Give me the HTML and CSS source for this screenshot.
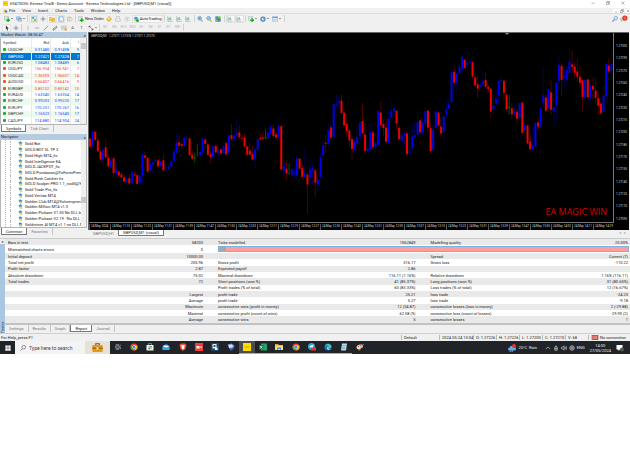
FILE: index.html
```html
<!DOCTYPE html>
<html lang="en">
<head>
<meta charset="utf-8">
<title>Exness-Trial8 - Demo Account</title>
<link rel="stylesheet" href="styles.css">
</head>
<body>
<svg class="defs" aria-hidden="true">
  <symbol id="newchart" viewBox="0 0 16 16"><path fill="#fff" stroke="#6f8798" d="M1 1h11v10H1z"/><path stroke="#35a035" d="M3 8l3-4 2 2 2-3" fill="none"/><path fill="#12b512" d="M9 6h4v3h3v4h-3v3H9v-3H6V9h3z"/></symbol>
  <symbol id="windows" viewBox="0 0 16 16"><path fill="#b9d9f2" stroke="#5b8fc0" d="M1 2h10v8H1zM5 6h10v8H5z"/><path fill="#5b9ad5" d="M5 6h10v2H5z"/></symbol>
  <symbol id="watch" viewBox="0 0 16 16"><path fill="#d9ecfa" stroke="#4e9ad0" d="M1 1h14v14H1z"/><path fill="#22b14c" d="M3 3h5v4H3z"/><path fill="#f0a020" d="M8 8h5v5H8z"/></symbol>
  <symbol id="cross" viewBox="0 0 16 16"><path stroke="#7f8c99" stroke-width="1.5" fill="none" d="M8 1v14M1 8h14M5 8a3 3 0 1 0 6 0 3 3 0 1 0-6 0"/></symbol>
  <symbol id="folder" viewBox="0 0 16 16"><path fill="#f5cd55" stroke="#c79a25" d="M1 3h5l2 2h6v8H1z"/><path fill="#ffd42a" stroke="#c48c10" d="M11 6l2 3 3 1-2 2v3l-3-1-3 1V12L6 10l3-1z"/></symbol>
  <symbol id="terminal" viewBox="0 0 16 16"><path fill="#fff" stroke="#4589d0" stroke-width="1.6" d="M2 2h12v12H2z"/><path fill="#a8cdf0" d="M3 3h3v10H3z"/></symbol>
  <symbol id="tester" viewBox="0 0 16 16"><path fill="#dce6ee" stroke="#7690a5" d="M1 3h9v10H1z"/><circle cx="10" cy="9" r="4" fill="#fff3c0" stroke="#c69a40"/></symbol>
  <symbol id="order" viewBox="0 0 16 16"><path fill="#fff" stroke="#708090" d="M2 1h9v12H2z"/><path stroke="#8aa" d="M4 4h5M4 6h5"/><path fill="#12b512" d="M8 6h4v3h3v4h-3v3H8v-3H5V9h3z"/></symbol>
  <symbol id="diamond" viewBox="0 0 16 16"><path fill="#f5bd24" stroke="#c98b12" d="M8 1l7 6-7 8-7-6z"/><path fill="#fff0a5" d="M8 3l3 3-4 3-3-1z"/></symbol>
  <symbol id="printer" viewBox="0 0 16 16"><path fill="#e7ebee" stroke="#9aa3aa" d="M4 1h8v7h3v6H1V8h3z"/></symbol>
  <symbol id="radio" viewBox="0 0 16 16"><circle cx="8" cy="8" r="6" fill="#eef1f3" stroke="#a7afb5"/><circle cx="8" cy="8" r="2" fill="#98a2aa"/></symbol>
  <symbol id="ea" viewBox="0 0 16 16"><path fill="#3d9ac9" d="M1 6l7-5 7 5-7 3z"/><path fill="#f4cf55" stroke="#b6902c" d="M4 8l4 2 3-2v5H5z"/><circle cx="12" cy="12" r="4" fill="#15ad31"/></symbol>
  <symbol id="robot" viewBox="0 0 16 16"><path fill="#3390bd" d="M1 6l6-5 8 5-7 3z"/><path fill="#2a779f" d="M3 7l5 3 5-3v3H3z"/><path fill="#e8c654" d="M5 10h8v4l-3 2-4-2z"/></symbol>
  <symbol id="bars" viewBox="0 0 16 16"><path stroke="#5f7683" fill="none" d="M2 1v13h13"/><path stroke="#2ea147" stroke-width="1.5" fill="none" d="M5 5v7M5 6h2M9 3v7M9 9h3"/></symbol>
  <symbol id="zoomin" viewBox="0 0 16 16"><path stroke="#d7ab36" stroke-width="3" d="M10 10l5 5"/><circle cx="7" cy="6" r="5" fill="#b9e1f8" stroke="#3585bd" stroke-width="1.5"/><path stroke="#247ab8" stroke-width="1.5" d="M4 6h6M7 3v6"/></symbol>
  <symbol id="zoomout" viewBox="0 0 16 16"><path stroke="#d7ab36" stroke-width="3" d="M10 10l5 5"/><circle cx="7" cy="6" r="5" fill="#b9e1f8" stroke="#3585bd" stroke-width="1.5"/><path stroke="#247ab8" stroke-width="1.5" d="M4 6h6"/></symbol>
  <symbol id="tiles" viewBox="0 0 16 16"><path fill="#3f7fc9" d="M1 1h7v7H1z"/><path fill="#56b43c" d="M8 1h7v7H8zM1 8h7v7H1z"/><path fill="#3f68a5" d="M8 8h7v7H8z"/><path stroke="#fff" d="M3 5h3M10 5h3M3 12h3M10 12h3"/></symbol>
  <symbol id="clock" viewBox="0 0 16 16"><circle cx="8" cy="8" r="7" fill="#377fbd"/><circle cx="8" cy="8" r="4" fill="#dcedf8"/><path stroke="#346" fill="none" d="M8 5v3h3"/></symbol>
  <symbol id="template" viewBox="0 0 16 16"><path fill="#dcecf8" stroke="#5c8fb8" d="M1 2h14v12H1z"/><path fill="#5c9dd2" d="M1 2h14v3H1z"/><path stroke="#d48a65" fill="none" d="M3 11l3-3 3 2 4-3"/></symbol>
  <symbol id="pointer" viewBox="0 0 16 16"><path fill="#333" d="M5 1l8 8-4 .4 2 5-2 .8-2-5-2 2z"/></symbol>
  <symbol id="vline" viewBox="0 0 16 16"><path stroke="#777" d="M8 2v12"/></symbol>
  <symbol id="hline" viewBox="0 0 16 16"><path stroke="#777" stroke-width="1.5" d="M2 8h12"/></symbol>
  <symbol id="dline" viewBox="0 0 16 16"><path stroke="#666" stroke-width="1.5" d="M2 14L14 2"/></symbol>
  <symbol id="channel" viewBox="0 0 16 16"><path stroke="#666" stroke-width="1.3" fill="none" d="M1 12L13 2M3 15L15 5M4 9v6M8 6v6M12 3v5"/></symbol>
  <symbol id="fibo" viewBox="0 0 16 16"><path stroke="#777" stroke-width="1.5" stroke-dasharray="2 1" d="M1 3h14M1 7h14M1 11h14"/><path fill="#e9a32b" d="M10 9h5v6h-5z"/></symbol>
  <symbol id="arrows" viewBox="0 0 16 16"><path stroke="#555" stroke-width="2" fill="none" d="M3 3l4 4M9 9l4 4M3 7V3h4M13 9v4H9"/></symbol>
  <symbol id="chrome" viewBox="0 0 16 16"><circle cx="8" cy="8" r="7" fill="#ea4335"/><path fill="#34a853" d="M2 4.500l6 3.500v7A7 7 0 0 1 2 4.500"/><path fill="#fbbc05" d="M8 5h6.300A7 7 0 0 1 8 15l3-6z"/><circle cx="8" cy="8" r="3.400" fill="#fff"/><circle cx="8" cy="8" r="2.600" fill="#4285f4"/></symbol>
</svg>

<div class="app">
  <header class="titlebar">
    <svg class="logo" viewBox="0 0 16 16"><path fill="#ffd400" d="M0 0h16v16H0z"/><path stroke="#8a7500" d="M3 8h10"/></svg>
    <span class="grow">69475035: Exness-Trial8 - Demo Account - Exness Technologies Ltd - [GBPUSD,M1 (visual)]</span>
    <button class="win" aria-label="Minimize"><svg viewBox="0 0 16 16"><path d="M2 9h12"/></svg></button>
    <button class="win" aria-label="Restore"><svg viewBox="0 0 16 16"><path d="M2 5h9v9H2zM5 5V2h9v9h-3"/></svg></button>
    <button class="win" aria-label="Close"><svg viewBox="0 0 16 16"><path d="M2 2l12 12M14 2L2 14"/></svg></button>
  </header>

  <nav class="menubar">
    <svg class="logo" viewBox="0 0 16 16"><path fill="#f0b429" d="M1 3h10v10H1z"/><path fill="#3c86c8" d="M6 6h9v8H6z"/></svg>
    <a href="#">File</a><a href="#">View</a><a href="#">Insert</a><a href="#">Charts</a><a href="#">Tools</a><a href="#">Window</a><a href="#">Help</a>
    <span class="grow"></span>
    <button class="child" aria-label="Minimize chart"><svg viewBox="0 0 16 16"><path d="M3 12h9"/></svg></button>
    <button class="child" aria-label="Restore chart"><svg viewBox="0 0 16 16"><path d="M2 6h8v8H2zM6 6V2h8v8h-4"/></svg></button>
    <button class="child" aria-label="Close chart"><svg viewBox="0 0 16 16"><path d="M3 3l10 10M13 3L3 13"/></svg></button>
  </nav>

  <div class="toolbar">
    <button class="tool drop" aria-label="New chart"><svg><use href="#newchart"/></svg></button>
    <button class="tool drop" aria-label="Profiles"><svg><use href="#windows"/></svg></button>
    <i class="sep"></i>
    <button class="tool on" aria-label="Market Watch"><svg><use href="#watch"/></svg></button>
    <button class="tool" aria-label="Data window"><svg><use href="#cross"/></svg></button>
    <button class="tool on" aria-label="Navigator"><svg><use href="#folder"/></svg></button>
    <button class="tool on" aria-label="Terminal"><svg><use href="#terminal"/></svg></button>
    <button class="tool" aria-label="Tester"><svg><use href="#tester"/></svg></button>
    <i class="sep"></i>
    <button class="tool text"><svg><use href="#order"/></svg>New Order</button>
    <button class="tool" aria-label="MetaEditor"><svg><use href="#diamond"/></svg></button>
    <button class="tool" aria-label="Print"><svg><use href="#printer"/></svg></button>
    <button class="tool" aria-label="Signals"><svg><use href="#radio"/></svg></button>
    <button class="tool text on"><svg><use href="#ea"/></svg>AutoTrading</button>
    <i class="sep"></i>
    <button class="tool" aria-label="Bar chart"><svg><use href="#bars"/></svg></button>
    <button class="tool" aria-label="Candlesticks"><svg><use href="#bars"/></svg></button>
    <button class="tool" aria-label="Line chart"><svg><use href="#bars"/></svg></button>
    <i class="sep"></i>
    <button class="tool" aria-label="Zoom in"><svg><use href="#zoomin"/></svg></button>
    <button class="tool" aria-label="Zoom out"><svg><use href="#zoomout"/></svg></button>
    <button class="tool" aria-label="Tile windows"><svg><use href="#tiles"/></svg></button>
    <i class="sep"></i>
    <button class="tool on" aria-label="Auto scroll"><svg><use href="#bars"/></svg></button>
    <button class="tool on" aria-label="Chart shift"><svg><use href="#bars"/></svg></button>
    <i class="sep"></i>
    <button class="tool drop" aria-label="Indicators"><svg><use href="#newchart"/></svg></button>
    <button class="tool drop" aria-label="Periods"><svg><use href="#clock"/></svg></button>
    <button class="tool drop" aria-label="Templates"><svg><use href="#template"/></svg></button>
    <i class="sep"></i>
    <span class="grow"></span>
    <button class="tool" aria-label="Search"><svg viewBox="0 0 16 16"><path stroke="#5b8fd6" stroke-width="3" d="M1 15l6-6"/><circle cx="10" cy="6" r="4.500" fill="#e5f0fb" stroke="#5b8fd6" stroke-width="2"/></svg></button>
    <button class="tool alert" aria-label="Notifications"><svg viewBox="0 0 16 16"><path fill="#d4dae0" stroke="#a5adb5" d="M0 7h9v6H5l-2 2v-2H0z"/><circle cx="10" cy="7" r="6" fill="#e03a22"/><path stroke="#fff" d="M10 4v6"/></svg></button>
  </div>

  <div class="toolbar">
    <button class="tool on" aria-label="Cursor"><svg><use href="#pointer"/></svg></button>
    <button class="tool" aria-label="Crosshair"><svg><use href="#cross"/></svg></button>
    <i class="sep"></i>
    <button class="tool" aria-label="Vertical line"><svg><use href="#vline"/></svg></button>
    <button class="tool" aria-label="Horizontal line"><svg><use href="#hline"/></svg></button>
    <button class="tool" aria-label="Trendline"><svg><use href="#dline"/></svg></button>
    <button class="tool" aria-label="Channel"><svg><use href="#channel"/></svg></button>
    <button class="tool" aria-label="Fibonacci"><svg><use href="#fibo"/></svg></button>
    <button class="tool">A</button>
    <button class="tool">T</button>
    <button class="tool drop" aria-label="Arrows"><svg><use href="#arrows"/></svg></button>
    <i class="sep"></i>
    <button class="tool off" disabled>M1</button><button class="tool off" disabled>M5</button><button class="tool off" disabled>M15</button><button class="tool off" disabled>M30</button><button class="tool off" disabled>H1</button><button class="tool off" disabled>H4</button><button class="tool off" disabled>D1</button><button class="tool off" disabled>W1</button><button class="tool off" disabled>MN</button>
    <i class="sep"></i>
  </div>

  <main class="work">
    <aside class="side">
      <section class="panel">
        <h2>Market Watch: 08:55:47<button aria-label="Close Market Watch">×</button></h2>
        <div class="scroller">
          <table class="quotes">
            <thead><tr><th>Symbol</th><th>Bid</th><th>Ask</th><th>!</th></tr></thead>
            <tbody>
              <tr class="up"><td>USDCHF</td><td>0.91480</td><td>0.91498</td><td>9</td></tr>
              <tr class="up sel"><td>GBPUSD</td><td>1.27421</td><td>1.27428</td><td>7</td></tr>
              <tr class="up"><td>EURUSD</td><td>1.08483</td><td>1.08489</td><td>6</td></tr>
              <tr class="down"><td>USDJPY</td><td>156.934</td><td>156.941</td><td>7</td></tr>
              <tr class="down"><td>USDCAD</td><td>1.36593</td><td>1.36607</td><td>14</td></tr>
              <tr class="down"><td>AUDUSD</td><td>0.66407</td><td>0.66416</td><td>9</td></tr>
              <tr class="down"><td>EURGBP</td><td>0.85132</td><td>0.85142</td><td>10</td></tr>
              <tr class="up"><td>EURAUD</td><td>1.63340</td><td>1.63354</td><td>14</td></tr>
              <tr class="up"><td>EURCHF</td><td>0.99203</td><td>0.99220</td><td>17</td></tr>
              <tr class="up"><td>EURJPY</td><td>170.251</td><td>170.267</td><td>16</td></tr>
              <tr class="up"><td>GBPCHF</td><td>1.16523</td><td>1.16540</td><td>17</td></tr>
              <tr class="up"><td>CADJPY</td><td>114.880</td><td>114.904</td><td>24</td></tr>
            </tbody>
          </table>
          <div class="bar"><i></i></div>
        </div>
        <div class="tabs"><button class="active">Symbols</button><button>Tick Chart</button></div>
      </section>
      <section class="panel">
        <h2>Navigator<button aria-label="Close Navigator">×</button></h2>
        <div class="scroller">
          <ul class="tree">
            <li><svg><use href="#robot"/></svg>Gold Bot</li>
            <li><svg><use href="#robot"/></svg>GOLD BOT SL TP 3</li>
            <li><svg><use href="#robot"/></svg>Gold High MT4_fix</li>
            <li><svg><use href="#robot"/></svg>Gold Intelligence EA</li>
            <li><svg><use href="#robot"/></svg>GOLD JACKPOT_fix</li>
            <li><svg><use href="#robot"/></svg>GOLD Pundawan@YoForexPren</li>
            <li><svg><use href="#robot"/></svg>Gold Rush Catcher fix</li>
            <li><svg><use href="#robot"/></svg>GOLD Scalper PRO 1.1_nodll@Yo</li>
            <li><svg><use href="#robot"/></svg>Gold Trade Pro_fix</li>
            <li><svg><use href="#robot"/></svg>Gold Veritas MT4</li>
            <li><svg><use href="#robot"/></svg>Golden Club MT4@Yoforexpren</li>
            <li><svg><use href="#robot"/></svg>Golden Million MT4 v1.3</li>
            <li><svg><use href="#robot"/></svg>Golden Pickaxe V1.50 No DLL by</li>
            <li><svg><use href="#robot"/></svg>Golden Pickaxe V2.19 - No DLL b</li>
            <li><svg><use href="#robot"/></svg>Goldminer AI MT4 v1.1 no DLL M</li>
          </ul>
          <div class="bar low"><i></i></div>
        </div>
        <div class="tabs"><button class="active">Common</button><button>Favorites</button></div>
      </section>
    </aside>

    <section class="charts">
      <div class="chart">
        <div class="plot">
          <svg id="candles" viewBox="0 0 1575 570" preserveAspectRatio="none" role="img" aria-label="GBPUSD candlesticks"></svg>
          <span class="ohlc">GBPUSD,M1&nbsp; 1.27371 1.27376 1.27371 1.27375</span>
          <span class="mark">EA MAGIC WIN</span>
          <i class="shift"></i>
        </div>
        <div class="prices">
          <span>1.27305</span><span>1.27290</span><span>1.27275</span><span>1.27260</span><span>1.27245</span><span>1.27230</span><span>1.27215</span><span>1.27200</span><span>1.27185</span><span>1.27170</span><span>1.27155</span><span>1.27140</span><span>1.27125</span><span>1.27110</span><span>1.27095</span>
        </div>
        <div class="times">
          <span>24 May 2024</span><span>24 May 11:15</span><span>24 May 11:23</span><span>24 May 11:31</span><span>24 May 11:39</span><span>24 May 11:47</span><span>24 May 11:55</span><span>24 May 12:03</span><span>24 May 12:11</span><span>24 May 12:19</span><span>24 May 12:27</span><span>24 May 12:35</span><span>24 May 12:43</span><span>24 May 12:51</span><span>24 May 12:59</span><span>24 May 13:07</span><span>24 May 13:15</span><span>24 May 13:23</span><span>24 May 13:31</span><span>24 May 13:39</span><span>24 May 13:47</span><span>24 May 13:55</span><span>24 May 14:03</span><span>24 May 14:11</span><span>24 May 14:19</span>
        </div>
      </div>
      <div class="tabs chart-tabs"><button>GBPUSD,H1</button><button class="active">GBPUSD,M1 (visual)</button><span class="grow"></span><span class="arrows">◂ &nbsp; ▸</span></div>
    </section>
  </main>

  <section class="tester">
    <div class="rail"><button aria-label="Close Tester">×</button><b>Tester</b></div>
    <div class="pane">
      <table class="report">
        <colgroup><col class="c1"><col class="c2"><col class="c3"><col class="c4"><col class="c3"><col class="c4"></colgroup>
        <tbody>
          <tr><th>Bars in test</th><td>58203</td><th>Ticks modelled</th><td>1062849</td><th>Modelling quality</th><td>25.00%</td></tr>
          <tr><th>Mismatched charts errors</th><td>0</td><td colspan="4" class="quality"><div><i></i></div></td></tr>
          <tr><th>Initial deposit</th><td>10000.00</td><th></th><td></td><th>Spread</th><td>Current (7)</td></tr>
          <tr><th>Total net profit</th><td>205.96</td><th>Gross profit</th><td>316.17</td><th>Gross loss</th><td>-110.22</td></tr>
          <tr><th>Profit factor</th><td>2.87</td><th>Expected payoff</th><td>2.86</td><th></th><td></td></tr>
          <tr><th>Absolute drawdown</th><td>75.02</td><th>Maximal drawdown</th><td>116.11 (1.16%)</td><th>Relative drawdown</th><td>1.16% (116.11)</td></tr>
          <tr><th>Total trades</th><td>72</td><th>Short positions (won %)</th><td>41 (85.37%)</td><th>Long positions (won %)</th><td>31 (80.65%)</td></tr>
          <tr><th></th><td></td><th>Profit trades (% of total)</th><td>60 (83.33%)</td><th>Loss trades (% of total)</th><td>12 (16.67%)</td></tr>
          <tr><th></th><td>Largest</td><th>profit trade</th><td>25.21</td><th>loss trade</th><td>-24.23</td></tr>
          <tr><th></th><td>Average</td><th>profit trade</th><td>5.27</td><th>loss trade</th><td>-9.18</td></tr>
          <tr><th></th><td>Maximum</td><th>consecutive wins (profit in money)</th><td>12 (34.87)</td><th>consecutive losses (loss in money)</th><td>2 (-29.88)</td></tr>
          <tr><th></th><td>Maximal</td><th>consecutive profit (count of wins)</th><td>62.58 (9)</td><th>consecutive loss (count of losses)</th><td>-29.90 (2)</td></tr>
          <tr><th></th><td>Average</td><th>consecutive wins</th><td>5</td><th>consecutive losses</th><td>1</td></tr>
        </tbody>
      </table>
      <div class="tabs report-tabs"><button>Settings</button><button>Results</button><button>Graph</button><button class="active">Report</button><button>Journal</button></div>
    </div>
  </section>

  <footer class="status">
    <span class="grow">For Help, press F1</span>
    <span class="profile">Default</span><span class="date">2024.05.24 13:04</span><span>O: 1.27226</span><span>H: 1.27226</span><span>L: 1.27200</span><span>C: 1.27210</span><span>V: 68</span>
    <span class="link"><svg viewBox="0 0 16 12"><path fill="#c84a3c" d="M0 0h16v12H0z"/><path stroke="#f2b8b0" stroke-width="1.500" d="M3 2v8M6 2v8M9 2v8M12 2v8"/></svg>No connection</span>
  </footer>

  <div class="taskbar">
    <button class="start" aria-label="Start"><svg viewBox="0 0 16 16"><path fill="#fff" d="M1 1h6.500v6.500H1zM8.500 1H15v6.500H8.500zM1 8.500h6.500V15H1zM8.500 8.500H15V15H8.500z"/></svg></button>
    <div class="search">
      <svg viewBox="0 0 16 16"><circle cx="10" cy="6" r="5"/><path d="M6 10l-5 5"/></svg>
      <input type="text" aria-label="Search" placeholder="Type here to search">
      <span class="case"><svg viewBox="0 0 30 26"><path fill="none" stroke="#7a4a10" stroke-width="3" d="M10 6V2h10v4"/><rect y="6" width="30" height="20" rx="3" fill="#e09a20"/><path fill="#a9650f" d="M0 13h30v4H0z"/><path fill="#ffe08a" d="M12 12h6v7h-6z"/></svg></span>
    </div>
    <div class="apps">
      <button aria-label="Task view"><svg class="small" viewBox="0 0 16 16"><path fill="none" stroke="#ddd" stroke-width="1.500" d="M2 5h9v6H2zM2 2h9M2 14h9M14 2v3M14 7v7"/></svg></button>
      <button aria-label="Chrome"><svg><use href="#chrome"/></svg></button>
      <button aria-label="Store"><svg viewBox="0 0 16 16"><path fill="none" stroke="#3ca5e8" stroke-width="1.500" d="M5 4V1h6v3"/><path fill="#e9f4fb" d="M1 4h14v11H1z"/><path fill="#e94" d="M5 6h3v3H5z"/><path fill="#3a4" d="M8.500 6h3v3h-3z"/><path fill="#28c" d="M5 9.500h3v3H5z"/><path fill="#db2" d="M8.500 9.500h3v3h-3z"/></svg></button>
      <button aria-label="Mail"><svg viewBox="0 0 16 16"><path fill="#1673bd" d="M1 6l7-5 7 5v8H1z"/><path fill="#f6fbff" d="M3 5h10v4H3z"/><path fill="#31a7ee" d="M1 7l7 4 7-4v7H1z"/></svg></button>
      <button aria-label="Brave"><svg viewBox="0 0 16 16"><path fill="#f4512c" d="M4 1h8l3 3-2 8-5 4-5-4-2-8z"/><path fill="#fff" d="M4 5l4-1 4 1-2 4 1 1-3 3-3-3 1-1z"/></svg></button>
      <button aria-label="Recorder"><svg viewBox="0 0 16 16"><path fill="#ee4038" d="M0 0h16v16H0z"/><path fill="#fff" d="M3 6h6v5H3zM10 8l3-2v5z"/></svg></button>
      <button aria-label="Virtual desktop"><svg viewBox="0 0 16 16"><path fill="#1d4964" d="M0 0h16v16H0z"/><path fill="#e4edf2" d="M3 2h8v9H3z"/><path fill="#276b9b" d="M5 4h4v4H5z"/><path fill="#fff" d="M8 9h5v5H8z"/></svg></button>
      <button aria-label="Remote"><svg viewBox="0 0 16 16"><path fill="#698dd2" d="M1 3l8-2 6 4-2 6-8 1z"/><path fill="#d2def5" d="M3 4l6-1 3 3-2 3-6 1z"/><path fill="#3e64b0" d="M6 11h5v4H6z"/></svg></button>
      <button class="run current" aria-label="Exness"><svg viewBox="0 0 16 16"><path fill="#ffdc00" d="M0 0h16v16H0z"/><path stroke="#8a7500" d="M3 8h10"/></svg></button>
      <button class="run" aria-label="Excel"><svg viewBox="0 0 16 16"><path fill="#21a366" d="M4 1h12v14H4z"/><path fill="#107c41" d="M0 4h9v9H0z"/><path stroke="#fff" stroke-width="1.500" d="M2.500 6l4 5M6.500 6l-4 5"/></svg></button>
      <button class="run" aria-label="File Explorer"><svg viewBox="0 0 16 16"><path fill="#e8a41c" d="M0 2h6l2 2h8v10H0z"/><path fill="#ffdc73" d="M0 5h16v9H0z"/><path fill="#4594d3" d="M4 9h8v5h-2v-2H6v2H4z"/></svg></button>
      <button class="run" aria-label="Chrome profile"><svg><use href="#chrome"/></svg></button>
      <button class="run" aria-label="Telegram"><svg viewBox="0 0 16 16"><circle cx="7" cy="7" r="7" fill="#2ba5e0"/><path fill="#fff" d="M2 7l9-4-2 8-3-2z"/><path fill="#e8392d" d="M6 9h10v6H6z"/></svg></button>
      <button class="run" aria-label="Edge"><svg viewBox="0 0 16 16"><circle cx="8" cy="8" r="7" fill="#1976c9"/><path fill="#43cf8d" d="M2 6a7 7 0 0 1 13 1c0 4-5 4-6 2 1-4-4-5-7-3"/><path fill="#dff3fb" d="M6 9c0 4 4 5 7 4-4 0-5-3-4-5z"/></svg></button>
      <button class="run" aria-label="Notepad"><svg viewBox="0 0 16 16"><path fill="#b4dbe4" d="M4 1h10l-2 14H2z"/><path stroke="#6291a4" d="M5 5h6M5 8h6M4 11h6"/></svg></button>
      <button aria-label="Paint"><svg viewBox="0 0 16 16"><path fill="#dce3e8" d="M1 8c1-6 13-7 13-1 0 3-4 2-4 4s-9 4-9-3"/><circle cx="5" cy="7" r="1.500" fill="#e44"/><circle cx="9" cy="5" r="1.500" fill="#3a5"/><path stroke="#d99838" stroke-width="2" d="M6 15l9-13"/></svg></button>
    </div>
    <span class="grow"></span>
    <div class="tray">
      <svg class="weather" viewBox="0 0 16 16"><path fill="#60a8ef" d="M3 13a3 3 0 0 1 0-6 5 5 0 0 1 9-1 3.500 3.500 0 0 1 1 7z"/><circle cx="12" cy="4" r="4" fill="#e2352b"/><path stroke="#a8d1ff" d="M5 13l-1 3M9 13l-1 3"/></svg>
      <span class="forecast">25°C&nbsp; Rain</span>
      <svg viewBox="0 0 16 16"><path d="M2 11l6-6 6 6"/></svg>
      <svg viewBox="0 0 16 16"><path d="M5 5h6v9H5zM8 5V1M3 10h10"/></svg>
      <svg viewBox="0 0 16 16"><path d="M1 6h3l4-4v12l-4-4H1zM11 5v6M14 3v10"/></svg>
      <svg viewBox="0 0 16 16"><path d="M2 8a6 6 0 1 0 12 0 6 6 0 1 0-12 0M2 8h12M8 2v12"/></svg>
      <span>ENG</span>
      <time>14:00<br>27/05/2024</time>
      <svg class="note" viewBox="0 0 16 16"><path fill="#fff" d="M1 2h12v9H8l-3 3v-3H1z"/><circle cx="12" cy="11" r="4" fill="#555"/></svg>
    </div>
  </div>
</div>
<script src="chart.js"></script>
</body>
</html>
```

FILE: styles.css
```css
* { box-sizing: border-box; }
body { margin: 0; background: #fff; color: #222; font: 4px/5px Roboto, "Noto Sans", sans-serif; }
button, input { margin: 0; padding: 0; border: 0; background: none; color: inherit; font: inherit; }
a { color: inherit; text-decoration: none; }
.defs { position: absolute; width: 0; height: 0; }
.grow { flex: 1; }
.app { display: flex; flex-direction: column; background: #f0f0f0; white-space: nowrap; }

.titlebar { display: flex; align-items: center; height: 8px; padding: 0 0 2px 3px; background: #fff; }
.logo { width: 5px; height: 5px; margin-right: 2px; }
.win { width: 15px; height: 5px; }
.win svg, .child svg { display: block; width: 4px; height: 4px; margin: 0 auto; fill: none; stroke: #444; stroke-width: 1.5; }

.menubar { display: flex; align-items: center; gap: 7px; height: 6px; padding: 0 0 0 3px; border-bottom: 1px solid #dcdcdc; }
.menubar .logo { height: 4px; margin-right: -6px; }
.child { width: 5px; background: #fff; }
.child + .child { margin-left: -6px; }

.toolbar { display: flex; align-items: center; height: 9px; padding: 0 2px; }
.tool { display: flex; align-items: center; justify-content: center; gap: 1px; width: 9px; height: 8px; color: #555; }
.tool svg { width: 6px; height: 6px; flex: none; }
.tool.on { background: #f8f8f8; box-shadow: inset 0 0 0 1px #e2e2e2; }
.tool.text { width: auto; padding: 0 1px; color: #222; }
.tool.off { color: #b0b0b0; font-size: 3px; }
.tool.drop { width: 12px; }
.tool.drop::after { content: ""; border: 1px solid transparent; border-top-color: #444; border-bottom: 0; }
.alert svg { width: 8px; height: 7px; }
.sep { width: 1px; height: 7px; margin: 0 1px; background: #d2d2d2; }

.work { display: flex; height: 206px; }
.side { width: 87px; flex: none; display: flex; flex-direction: column; gap: 2px; padding-bottom: 3px; }
.panel { display: flex; flex-direction: column; }
.panel:first-child { flex: 100; }
.panel:last-child { flex: 101; }
.panel h2 { display: flex; justify-content: space-between; height: 6px; margin: 0; padding: 0 1px; background: #b4cbe0; color: #223; font-size: 4px; font-weight: 400; line-height: 5px; }
.scroller { flex: 1; min-height: 0; display: flex; background: #fff; border: 1px solid #b5b5b5; border-top: 0; }
.bar { width: 5px; flex: none; background: #f0f0f0; padding-top: 5px; }
.bar i { display: block; height: 6px; background: #c9c9c9; }
.bar.low { padding-top: 57px; }

.quotes { flex: 1; border-collapse: collapse; table-layout: fixed; line-height: 4px; }
.quotes th, .quotes td { padding: 0 1px 0 0; text-align: right; font-weight: 400; border-right: 1px solid #e8ece8; }
.quotes th { height: 9px; color: #444; }
.quotes th:first-child, .quotes td:first-child { width: 30px; padding-left: 2px; text-align: left; color: #333; }
.quotes th:last-child, .quotes td:last-child { width: 10px; }
.quotes td:first-child::before { content: ""; display: inline-block; width: 3px; height: 3px; margin-right: 2px; border-radius: 1px; background: #1cab3c; }
.quotes .down td:first-child::before { background: #e4572e; }
.quotes tbody tr { background: #fff; }
.quotes tbody tr:nth-child(odd) { background: #effaef; }
.quotes .up { color: #2340ff; }
.quotes .down { color: #ff3526; }
.quotes tbody tr.sel { background: #0078d7; }
.quotes tbody tr.sel, .quotes .sel td:first-child { color: #fff; }

.tree { flex: 1; min-width: 0; display: grid; grid-auto-rows: 1fr; align-items: center; margin: 0 0 0 4px; padding: 1px 0 0; list-style: none; border-left: 1px dotted #bbb; }
.tree li { display: flex; align-items: center; gap: 2px; height: 100%; margin-left: 4px; padding-left: 7px; border-left: 1px dotted #bbb; }
.tree svg { width: 5px; height: 5px; flex: none; }

.tabs { display: flex; height: 7px; padding-left: 1px; color: #777; }
.tabs button { padding: 0 4px; border-right: 1px solid #c4c4c4; }
.tabs .active { background: #fff; border: 1px solid #777; border-top: 0; color: #222; }

.charts { flex: 1; min-width: 0; display: flex; flex-direction: column; padding: 0 1px 0 1px; }
.chart { flex: 1; display: grid; grid-template-columns: 1fr 15px; grid-template-rows: 1fr 7px; background: #000; border: 1px solid #666; border-width: 1px 0 0 1px; color: #ddd; font-size: 3px; line-height: 4px; }
.plot { position: relative; min-height: 0; border-right: 1px solid #777; border-bottom: 1px solid #777; }
.plot > svg { position: absolute; width: 100%; height: 100%; }
.ohlc { position: absolute; top: 1px; left: 2px; }
.mark { position: absolute; right: 6px; bottom: 4px; color: #d40000; font: 9px/12px "Open Sans", sans-serif; }
.shift { position: absolute; top: 0; right: 104px; border: 2px solid transparent; border-top-color: #789; border-bottom: 0; }
.prices { grid-row: span 2; display: flex; flex-direction: column; padding: 7px 0 5px 2px; }
.prices span { flex: 1; display: flex; align-items: center; }
.times { display: grid; grid-template-columns: repeat(25, 1fr); padding-top: 1px; }
.times span { padding-left: 1px; border-left: 1px solid #555; min-width: 0; }
.chart-tabs { height: 8px; padding-bottom: 2px; }
.chart-tabs button { border-right: 0; }
.arrows { padding-right: 3px; color: #aaa; }

.tester { display: flex; border-top: 1px solid #ccc; }
.rail { width: 5px; flex: none; display: flex; flex-direction: column; align-items: center; justify-content: space-between; background: #a9c6e2; color: #223; }
.rail b { writing-mode: vertical-rl; transform: rotate(180deg); font-weight: 400; }
.rail button { width: 5px; background: #f0f0f0; line-height: 5px; }
.pane { flex: 1; min-width: 0; }
.report { width: 100%; height: 86px; table-layout: fixed; border-collapse: collapse; line-height: 5px; border-bottom: 2px solid #c2c2c2; background: #fff; }
.report tr:nth-child(odd) { background: #e9e9e9; }
.report th, .report td { padding: 0 2px 0 13px; text-align: right; font-weight: 400; }
.report th { padding-right: 0; text-align: left; }
.report th:first-child { padding-left: 3px; }
.c1 { width: 17%; }
.c2 { width: 15%; }
.c3 { width: 20%; }
.c4 { width: 14%; }
.report .quality { padding-right: 1px; }
.quality div { height: 6px; border: 1px solid #79b4e0; background: #ff9d9d; }
.quality i { display: block; width: 7px; height: 4px; background: #a9a9a9; }
.report-tabs { height: 8px; padding: 0 0 1px; }

.status { display: flex; align-items: center; height: 8px; padding: 0 4px 0 1px; border-top: 1px solid #d0d0d0; }
.status span:not(.grow) { padding-left: 2px; border-left: 1px solid #bbb; min-width: 23px; }
.status .profile { width: 38px; }
.status .date { width: 34px; }
.status .link { display: flex; align-items: center; gap: 1px; }
.link svg { width: 8px; height: 5px; }

.taskbar { display: flex; align-items: stretch; height: 13px; background: #202328; color: #eee; }
.taskbar svg { display: block; width: 8px; height: 8px; margin: auto; }
.taskbar .small { width: 6px; height: 6px; }
.start { width: 15px; }
.start svg { width: 6px; height: 6px; }
.search { display: flex; align-items: center; width: 95px; background: #f3f3f3; color: #444; font-size: 5px; }
.search > svg { width: 6px; height: 6px; margin: 0 3px 0 5px; flex: none; fill: none; stroke: #444; stroke-width: 1.5; }
.search input { flex: 1; min-width: 0; height: 8px; }
.search input::placeholder { color: #444; opacity: 1; }
.case { display: flex; width: 25px; height: 100%; background: #e8e2d6; }
.case svg { width: 11px; height: 9px; }
.apps { display: flex; width: 41%; }
.apps button { flex: 1; border-bottom: 1px solid transparent; }
.apps .run { border-bottom-color: #76b9ed; }
.apps .current { background: #4a4d50; }
.tray { display: flex; align-items: center; gap: 2px; padding-right: 6px; }
.tray svg { width: 6px; height: 6px; margin: 0; fill: none; stroke: #eee; stroke-width: 1.5; }
.tray .weather { width: 8px; height: 8px; stroke: none; }
.tray .forecast { margin-right: 6px; }
.tray time { margin: 0 3px; text-align: center; }
.tray .note { width: 8px; height: 8px; stroke: none; }
```

FILE: chart.js
```js
// Each bar: colour, body top, body bottom, wick top, wick bottom.
// A section's base is added to all of its heights.
const sections = [
  { base: 231, bars: `r 88 112 85 115,b 66 108 64 112,r 67 92 63 96,r 93 126 83 128,r 126 150 120 155,b 120 150 113 168,r 114 144 86 148,r 145 171 138 175,b 154 174 142 178,r 147 191 144 202,b 181 195 150 198,r 187 198 184 204,r 195 204 190 208,r 204 216 198 220,b 211 218 196 220,r 207 223 195 225,b 188 224 184 226,r 195 199 186 204,r 198 224 194 226,b 198 222 192 226,b 135 199 130 222,r 138 145 128 160,r 145 187 142 190,b 164 183 160 188,b 159 166 150 190,b 153 156 145 160,r 153 171 145 175,b 156 171 150 175,r 153 183 135 185,b 180 183 170 188,b 173 179 168 182,b 156 172 150 175,b 126 155 118 158,b 100 130 70 132,r 99 109 80 128,r 104 109 95 120,b 84 108 80 112,b 86 88 83 90,r 87 137 85 140,r 136 148 120 152,g 143 147 130 162,g 136 138 105 141,b 128 137 120 140,b 87 129 84 132,r 90 103 88 120,r 105 136 102 140,r 135 142 125 162,b 110 143 108 148,r 110 129 105 132,b 126 130 115 148,r 120 132 117 136,b 111 132 95 135,r 101 135 96 138,b 78 130 75 134,r 77 88 44 95,b 78 89 60 100,b 70 78 28 82,r 69 83 50 88,r 85 88 75 98,r 85 111 70 115,r 111 136 108 140,r 124 136 100 140,r 135 150 110 153,b 120 148 115 178,b 89 122 85 125,r 85 90 70 95,r 84 88 65 92,g 83 87 60 90,b 69 86 55 90,b 51 73 45 76,r 57 80 45 85,r 75 84 70 95,b 50 83 45 85,r 50 180 48 184,b 171 184 150 200` },
  { base: 81, bars: `r 328 342 305 360,g 342 344 312 346,b 331 346 325 350,b 340 345 328 368,b 296 348 293 352,r 298 328 296 332,r 326 353 312 356,b 342 353 270 356,r 346 376 340 463,b 328 355 295 380,b 327 334 310 380,r 333 370 328 413,b 361 376 350 398,b 294 353 280 356,b 257 289 245 304,r 250 253 225 282,b 212 253 193 258,r 204 234 195 238,b 134 234 131 238,b 135 140 107 145,b 125 131 108 160,r 123 160 105 165,r 159 197 152 202,r 193 215 170 232,r 213 243 208 262,r 239 269 230 303,b 249 273 235 277,b 232 252 190 256,b 190 230 188 252,r 185 221 130 225,r 225 275 192 278,b 267 275 240 284,b 217 269 190 272,r 219 262 212 268,b 250 262 222 278,b 154 256 152 258,r 159 197 125 202,r 193 205 178 228,r 204 247 178 256,b 178 251 150 253,b 154 174 125 190,b 147 156 130 175,r 154 192 150 210,r 205 239 200 242,b 227 244 220 275,b 221 227 215 262,r 222 284 216 287,b 276 281 200 286,b 231 267 196 270,b 227 232 185 236,b 188 225 155 228,r 183 218 180 224,b 189 222 180 226,b 154 192 143 196,r 153 204 150 220,r 206 275 190 282,b 212 272 195 275,b 156 206 143 210,r 159 198 155 202,r 201 222 175 228,b 171 217 165 248,b 150 165 123 175,b 134 147 118 150,b 36 128 18 132` },
  { base: -9, bars: `r 126 159 108 162,b 131 159 128 192,b 111 129 100 135,b 81 120 75 125,r 90 114 86 118,b 97 105 54 118,b 95 98 85 122,r 97 140 95 145,r 143 167 130 170,r 164 177 138 205,b 165 171 155 175,b 153 164 125 168,r 150 171 128 175,r 171 178 165 190,r 177 246 175 264,b 226 241 178 256,b 207 221 180 230,b 153 197 148 222,b 150 153 138 195,r 153 189 150 212,r 195 239 192 242,g 231 236 195 255,r 236 254 220 270,b 246 250 225 265,r 246 267 238 285,b 220 265 218 268,r 219 310 217 314,b 288 302 275 304,r 288 342 285 346,r 336 359 315 362,b 348 360 290 362,b 280 352 278 355,r 279 291 262 304,b 236 291 234 294,b 197 221 110 236,r 204 243 195 246,b 178 235 176 240,r 188 241 152 255,b 234 245 200 295,b 159 229 157 275,b 105 153 80 182,r 108 150 98 200,b 138 144 110 178,b 120 150 105 162,b 96 129 55 130,r 104 111 62 128,r 110 129 95 145,r 125 141 85 158,r 141 159 107 175,r 152 202 150 246,b 150 205 147 208,r 149 202 147 210,b 168 203 165 222,r 168 180 142 208,r 183 204 145 222,r 206 228 190 252,r 222 251 218 255,b 197 246 193 255,b 102 200 98 203,r 107 124 85 130,b 102 123 68 148` }
];
const body = { r: '#f00000', b: '#0000f0', g: '#006000' };
const wick = { r: '#600000', b: '#000060', g: '#006000' };
const step = 7.875;
let x = 3;
let marks = '';
for (const { base, bars } of sections) {
  for (const bar of bars.split(',')) {
    const [color, ...ys] = bar.split(' ');
    const [top, bottom, high, low] = ys.map(y => Number(y) + base);
    marks += `<path stroke="${wick[color]}" stroke-width="2.5" d="M${x} ${high}V${low}"/>`;
    marks += `<path stroke="${body[color]}" stroke-width="6" d="M${x} ${top}V${bottom}"/>`;
    x += step;
  }
}
document.getElementById('candles').innerHTML = marks;
```
